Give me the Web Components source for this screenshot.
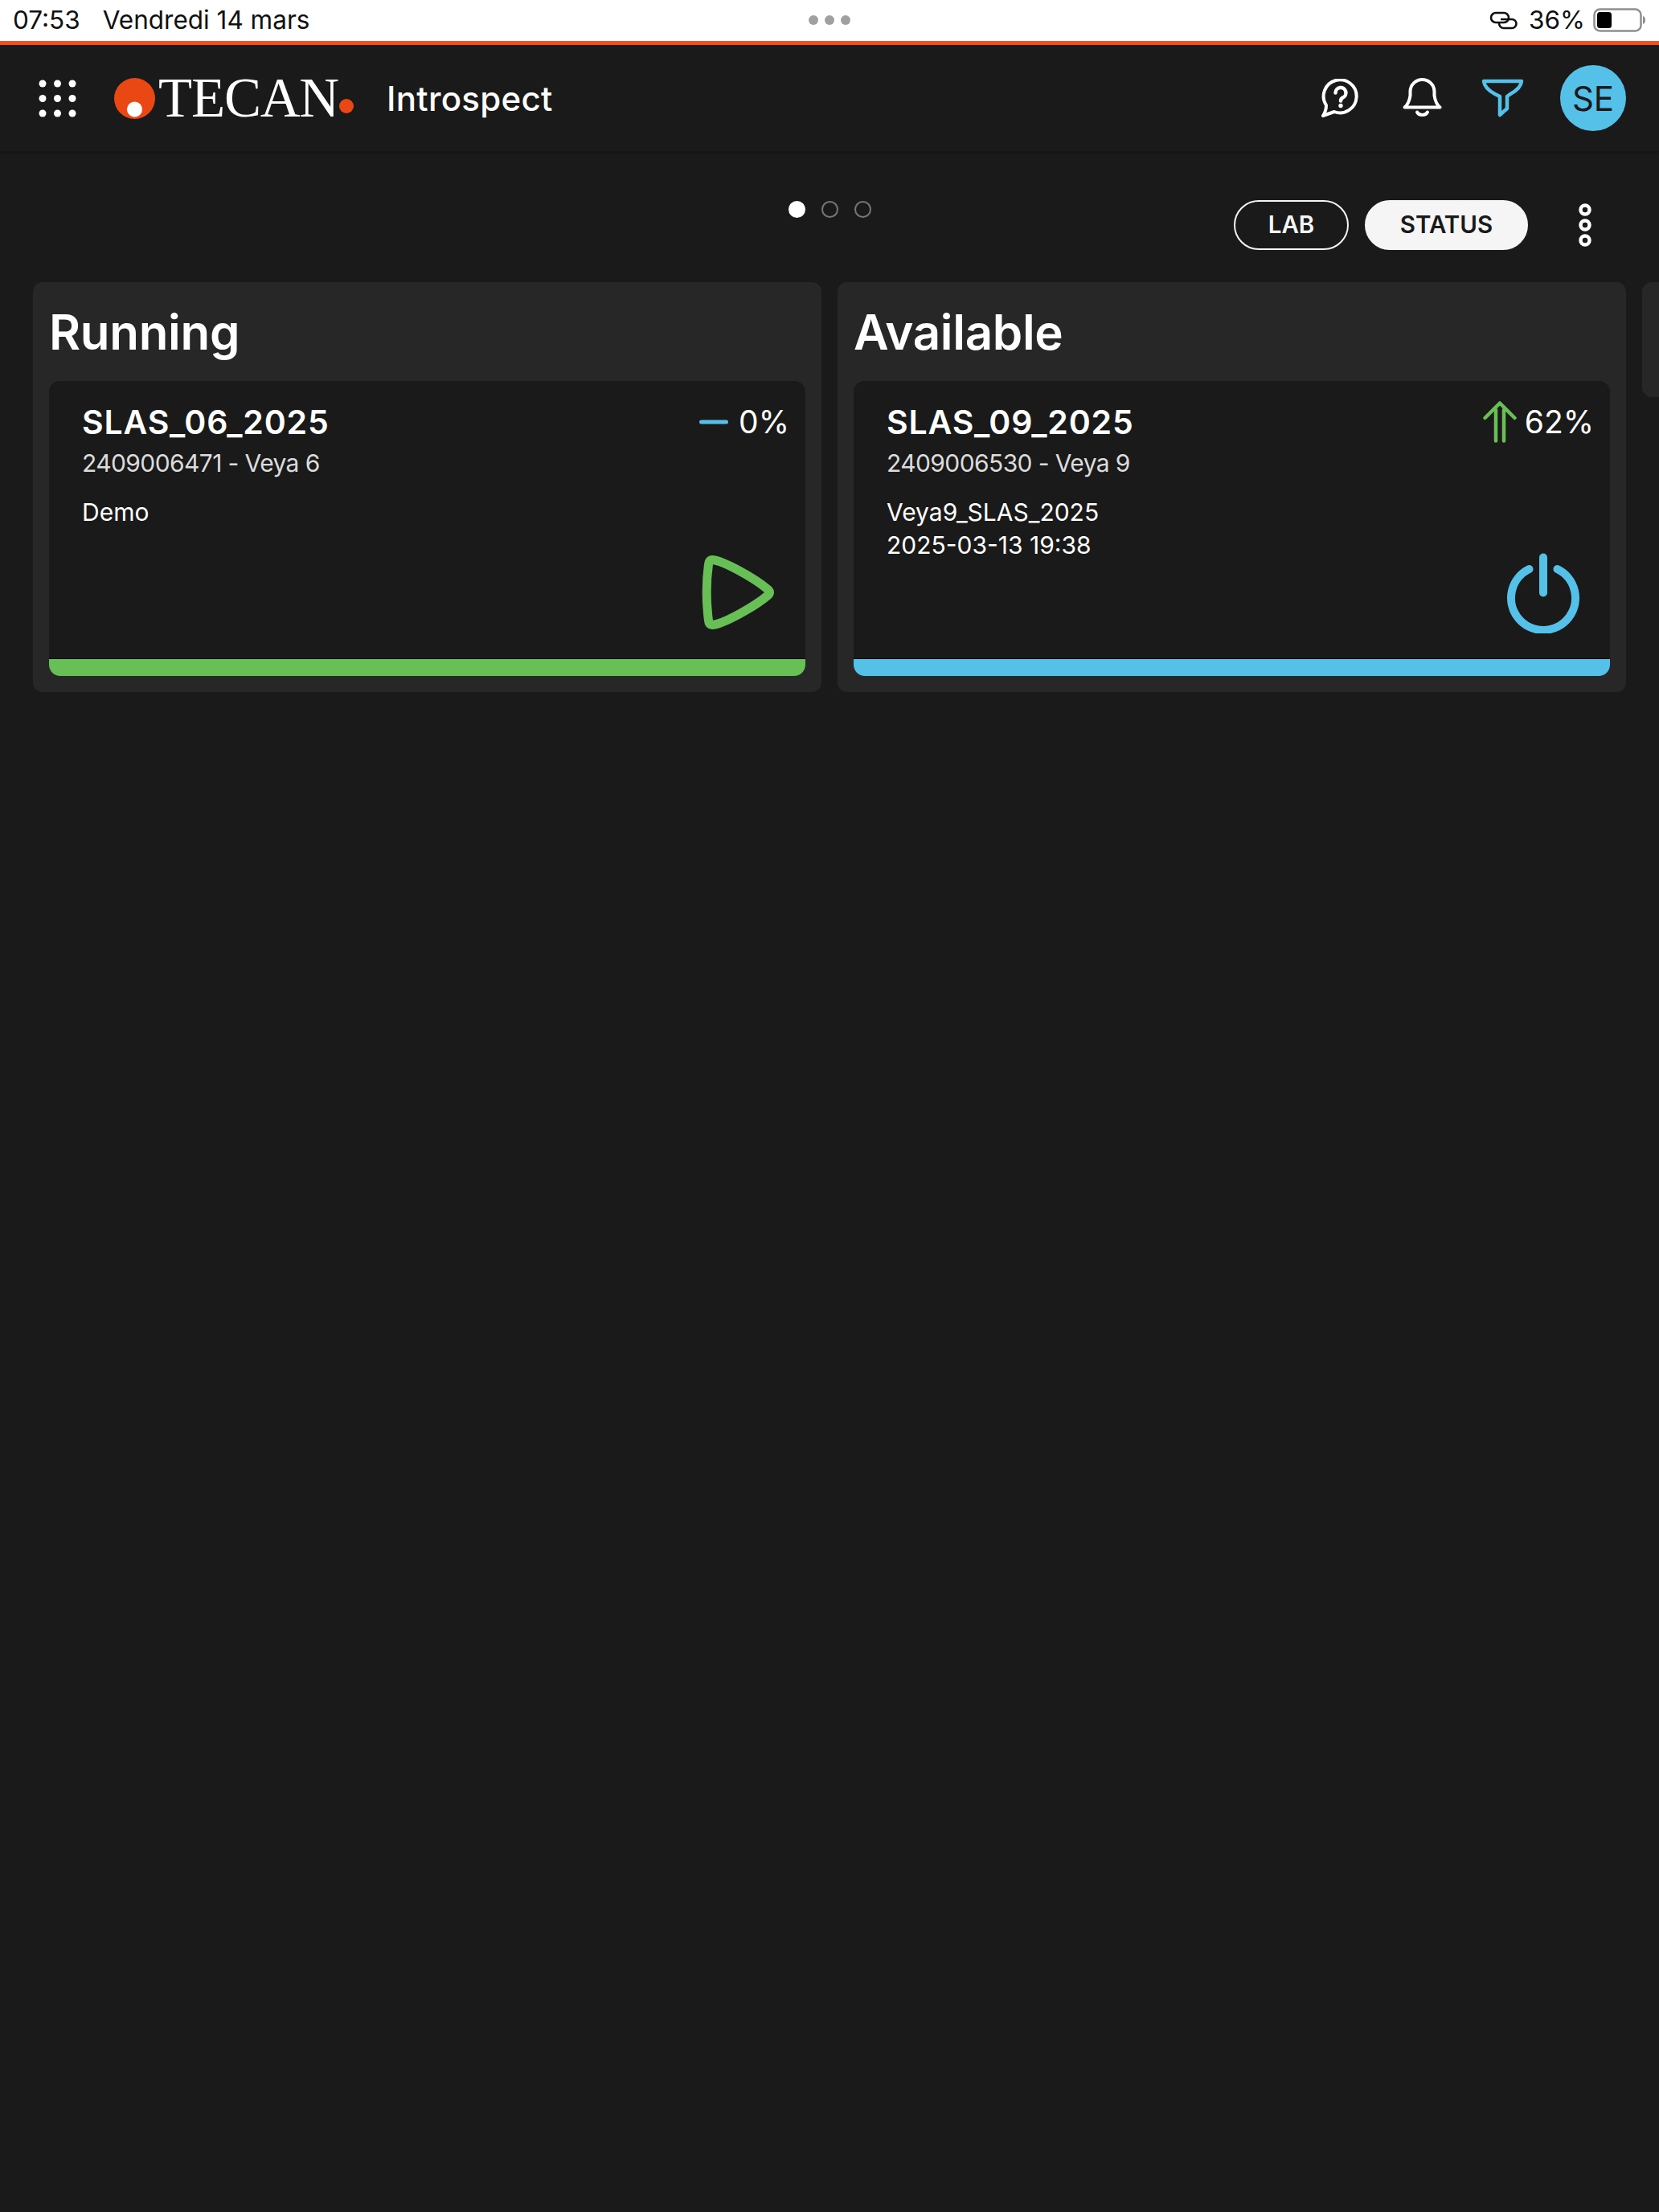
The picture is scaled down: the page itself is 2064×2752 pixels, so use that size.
<!DOCTYPE html>
<html lang="fr">
<head>
<meta charset="utf-8">
<title>Introspect</title>
<style>
  html, body { margin: 0; background: #1a1a1a; }
  body { font-family: Inter, "Noto Sans", sans-serif; color: #fff; height: 2752px; overflow: hidden; }
</style>
</head>
<body>
<ipad-status time="07:53" date="Vendredi 14 mars" battery="36%"></ipad-status>
<app-header title-text="Introspect" initials="SE"></app-header>
<view-toolbar></view-toolbar>
<panel-row>
  <status-panel heading="Running">
    <device-card name="SLAS_06_2025" serial="2409006471 - Veya 6" percent="0%" color="#67bf55">
      <svg slot="trend" width="36" height="6" viewBox="0 0 36 6"><rect width="36" height="5" y="0.5" rx="2.5" fill="#56c1e8"/></svg>
      <span>Demo</span>
      <svg slot="action" width="96" height="104" viewBox="0 0 96 104" fill="none" stroke="#67bf55" stroke-width="11" stroke-linejoin="round"><path transform="translate(-1.5 0)" d="M18 12.5C32 14 70 35 87 49.5Q91 53 87 56.5C70 71 32 92 18 93.5Q13.5 94 13 88C10 65 10 40 13 18Q13.5 12 18 12.5Z"/></svg>
    </device-card>
  </status-panel>
  <status-panel heading="Available">
    <device-card name="SLAS_09_2025" serial="2409006530 - Veya 9" percent="62%" color="#56c1e8">
      <svg slot="trend" class="arrow" width="42" height="52" viewBox="0 0 42 52" fill="none" stroke="#67bf55" stroke-width="4.5" stroke-linecap="round" stroke-linejoin="round" style="margin-right:-3px"><path d="M2.5 21L21 2.5L39.5 21M16 11V49.5M26 11V49.5"/></svg>
      <span>Veya9_SLAS_2025</span>
      <span>2025-03-13 19:38</span>
      <svg slot="action" width="96" height="104" viewBox="0 0 96 104" fill="none" stroke="#56c1e8" stroke-width="10" stroke-linecap="round"><path transform="translate(1 1.5)" d="M30.5 22.5A40 40 0 1 0 65.5 22.5M48 8V52"/></svg>
    </device-card>
  </status-panel>
  <status-panel></status-panel>
</panel-row>

<script>
// every element keeps its own template, same shape for all of them
function makeTemplate(html) {
    const template = document.createElement('template');
    template.innerHTML = html;
    return template;
}

function mount(el, template) {
    el.attachShadow({ mode: 'open' });
    el.shadowRoot.appendChild(template.content.cloneNode(true));
}

const statusTemplate = makeTemplate(`
  <style>
    :host {
        display: grid;
        grid-template-columns: 1fr auto 1fr;
        align-items: center;
        height: 51px;
        padding: 0 16px;
        box-sizing: border-box;
        background: #fff;
        color: #111;
        font: 400 31.5px Inter, sans-serif;
    }
    .left { display: flex; gap: 28px; padding-bottom: 2px; }
    .grip { display: flex; gap: 8px; padding-bottom: 2px; }
    .grip i { width: 12px; height: 12px; border-radius: 50%; background: #a0a0a0; }
    .right { display: flex; align-items: center; justify-content: flex-end; gap: 13px; padding-bottom: 2px; }
    .battery { margin-right: -3px; }
    svg { display: block; }
  </style>
  <div class="left"><span class="time"></span><span class="date"></span></div>
  <div class="grip"><i></i><i></i><i></i></div>
  <div class="right">
    <svg width="36" height="24" viewBox="0 0 36 24" fill="none" stroke="#111" stroke-width="2.6">
      <rect x="2" y="3" width="22" height="12" rx="6"/>
      <path d="M14 11H28A5.5 5.5 0 0 1 28 22H18A6 6 0 0 1 12 15.5"/>
    </svg>
    <span class="battery"></span>
    <svg width="66" height="30" viewBox="0 0 66 30">
      <rect x="1.5" y="1.5" width="58" height="27" rx="7" fill="none" stroke="#8f8f8f" stroke-width="2.5"/>
      <rect x="5" y="5" width="18" height="20" rx="3.5" fill="#000"/>
      <path d="M62 10Q65 11 65 15Q65 19 62 20Z" fill="#8f8f8f"/>
    </svg>
  </div>
`);

class IpadStatus extends HTMLElement {
    constructor() {
        super();
        mount(this, statusTemplate);
        this.shadowRoot.querySelector('.time').innerText = this.getAttribute('time');
        this.shadowRoot.querySelector('.date').innerText = this.getAttribute('date');
        this.shadowRoot.querySelector('.battery').innerText = this.getAttribute('battery');
    }
}

const headerTemplate = makeTemplate(`
  <style>
    :host {
        display: flex;
        align-items: center;
        height: 137px;
        box-sizing: border-box;
        padding: 0 41px 0 48px;
        border-top: 5px solid #f04e23;
        background: #1a1a1a;
        box-shadow: 0 2px 3px rgba(0, 0, 0, .25);
        position: relative;
    }
    svg { display: block; flex: none; }
    .logo { display: flex; align-items: center; margin-left: 47px; color: #fff; }
    .word {
        font: 400 69px/1 "Liberation Serif", serif;
        letter-spacing: -1.2px;
        margin: 0 0 0 4px;
    }
    .dot { margin: 20px 0 0 1px; }
    .title { font: 500 42px Inter, sans-serif; margin-left: 41px; letter-spacing: .3px; }
    .tools { display: flex; align-items: center; margin-left: auto; }
    .help { margin-right: 54px; }
    .bell { margin-right: 48px; }
    .filter { margin-right: 44px; }
    .avatar {
        width: 82px;
        height: 82px;
        border-radius: 50%;
        background: #56c1e8;
        color: #1a1a1a;
        display: flex;
        align-items: center;
        justify-content: center;
        font: 400 42px Inter, sans-serif;
    }
  </style>
  <svg width="47" height="47" viewBox="0 0 47 47" fill="#fff">
    <circle cx="5" cy="5" r="4.5"/><circle cx="23.5" cy="5" r="4.5"/><circle cx="42" cy="5" r="4.5"/>
    <circle cx="5" cy="23.5" r="4.5"/><circle cx="23.5" cy="23.5" r="4.5"/><circle cx="42" cy="23.5" r="4.5"/>
    <circle cx="5" cy="42" r="4.5"/><circle cx="23.5" cy="42" r="4.5"/><circle cx="42" cy="42" r="4.5"/>
  </svg>
  <div class="logo">
    <svg width="51" height="51" viewBox="0 0 51 51">
      <ellipse cx="25.5" cy="25.5" rx="25.5" ry="25.5" fill="#e94814"/>
      <ellipse cx="25.5" cy="39" rx="9.5" ry="9.5" fill="#fff"/>
    </svg>
    <span class="word">TECAN</span>
    <svg class="dot" width="18" height="18" viewBox="0 0 18 18"><circle cx="9" cy="9" r="9" fill="#e94814"/></svg>
  </div>
  <span class="title"></span>
  <div class="tools">
    <svg class="help" width="48" height="48" viewBox="0 0 48 48" fill="none" stroke="#fff" stroke-width="4" stroke-linejoin="round" stroke-linecap="round">
      <path d="M7 33A20.5 20.5 0 1 1 17 41L3 46Q7 40 7 33Z"/>
      <path d="M18.5 17.5A6.5 6.5 0 1 1 27.5 23.5Q25 25 25 27.5" stroke-width="4.5"/>
      <circle cx="25" cy="33.5" r="2.7" fill="#fff" stroke="none"/>
    </svg>
    <svg class="bell" width="50" height="50" viewBox="0 0 50 50" fill="none" stroke="#fff" stroke-width="4" stroke-linejoin="round" stroke-linecap="round">
      <path d="M2.5 36.5Q8 32 9.5 22V17A15 15 0 0 1 39.5 17V22Q41 32 46.5 36.5Z"/>
      <path d="M18 42.5A7 5.5 0 0 0 31 42.5"/>
    </svg>
    <svg class="filter" width="54" height="48" viewBox="0 0 54 48" fill="none" stroke="#56c1e8" stroke-width="4.5" stroke-linejoin="round">
      <path d="M3 3H50Q49 12 36 19L32 22V37L23 45V22L17 19Q4 12 3 3Z"/>
    </svg>
    <div class="avatar"></div>
  </div>
`);

class AppHeader extends HTMLElement {
    constructor() {
        super();
        mount(this, headerTemplate);
        this.shadowRoot.querySelector('.title').innerText = this.getAttribute('title-text');
        this.shadowRoot.querySelector('.avatar').innerText = this.getAttribute('initials');
    }
}

const toolbarTemplate = makeTemplate(`
  <style>
    :host {
        display: grid;
        grid-template-columns: 1fr auto 1fr;
        height: 163px;
        box-sizing: border-box;
        padding: 61px 84px 0 84px;
    }
    .pager { display: flex; gap: 20px; padding-top: 1px; align-items: flex-start; }
    .pager i { width: 21px; height: 21px; border-radius: 50%; box-sizing: border-box; border: 2.5px solid #777; }
    .pager i.on { background: #fff; border-color: #fff; }
    .actions { display: flex; align-items: flex-start; justify-content: flex-end; }
    button {
        height: 62px;
        box-sizing: border-box;
        border-radius: 31px;
        border: 2.5px solid #f5f5f5;
        background: transparent;
        color: #f5f5f5;
        font: 600 29.5px Inter, sans-serif;
        padding: 0 0 2px;
    }
    .lab { width: 143px; }
    .status { width: 203px; margin-left: 20px; background: #f5f5f5; color: #1a1a1a; }
    svg { display: block; margin-left: 63px; margin-top: 4px; }
  </style>
  <span></span>
  <div class="pager"><i class="on"></i><i></i><i></i></div>
  <div class="actions">
    <button class="lab">LAB</button>
    <button class="status">STATUS</button>
    <svg width="16" height="54" viewBox="0 0 16 54" fill="none" stroke="#fff" stroke-width="4.5">
      <circle cx="8" cy="8" r="5.5"/><circle cx="8" cy="27" r="5.5"/><circle cx="8" cy="46" r="5.5"/>
    </svg>
  </div>
`);

class ViewToolbar extends HTMLElement {
    constructor() {
        super();
        mount(this, toolbarTemplate);
    }
}

const rowTemplate = makeTemplate(`
  <style>
    :host {
        display: flex;
        align-items: flex-start;
        gap: 20px;
        padding-left: 41px;
        overflow: hidden;
    }
  </style>
  <slot></slot>
`);

class PanelRow extends HTMLElement {
    constructor() {
        super();
        mount(this, rowTemplate);
    }
}

const panelTemplate = makeTemplate(`
  <style>
    :host {
        display: block;
        flex: 0 0 981px;
        box-sizing: border-box;
        min-height: 143px;
        padding: 0 20px 20px;
        background: #272727;
        border-radius: 12px;
    }
    h2 {
        margin: 0;
        height: 123px;
        padding-top: 25px;
        box-sizing: border-box;
        font: 600 60px/74px Inter, sans-serif;
        letter-spacing: -.3px;
        color: #fff;
    }
    h2:empty { height: 0; padding: 0; }
  </style>
  <h2></h2>
  <slot></slot>
`);

class StatusPanel extends HTMLElement {
    constructor() {
        super();
        mount(this, panelTemplate);
        this.shadowRoot.querySelector('h2').innerText = this.getAttribute('heading') || '';
    }
}

const cardTemplate = makeTemplate(`
  <style>
    :host {
        display: flex;
        flex-direction: column;
        height: 367px;
        background: #1a1a1a;
        border-radius: 14px;
        overflow: hidden;
    }
    .body {
        flex: 1;
        display: flex;
        justify-content: space-between;
        padding: 27px 20px 0 41px;
        min-height: 0;
    }
    .name { font: 600 41px/48px Inter, sans-serif; letter-spacing: .8px; }
    .serial { font: 400 30px/38px Inter, sans-serif; letter-spacing: -.6px; color: #dcdcdc; margin-top: 8px; }
    .notes {
        display: flex;
        flex-direction: column;
        margin-top: 22px;
        font: 400 30px/41px Inter, sans-serif;
        color: #fff;
    }
    .side { display: flex; flex-direction: column; align-items: flex-end; justify-content: space-between; }
    .rate { display: flex; align-items: center; height: 48px; gap: 13px; font: 400 39px/48px Inter, sans-serif; }
    .action { display: block; margin: 0 16px 28px 0; }
    .bar { height: 21px; flex: none; box-shadow: 0 -1px 0 #0c0c0c; }
  </style>
  <div class="body">
    <div>
      <div class="name"></div>
      <div class="serial"></div>
      <div class="notes"><slot></slot></div>
    </div>
    <div class="side">
      <div class="rate"><slot name="trend"></slot><span class="percent"></span></div>
      <div class="action"><slot name="action"></slot></div>
    </div>
  </div>
  <div class="bar"></div>
`);

class DeviceCard extends HTMLElement {
    constructor() {
        super();
        mount(this, cardTemplate);
        this.shadowRoot.querySelector('.name').innerText = this.getAttribute('name');
        this.shadowRoot.querySelector('.serial').innerText = this.getAttribute('serial');
        this.shadowRoot.querySelector('.percent').innerText = this.getAttribute('percent');
        this.shadowRoot.querySelector('.bar').style.background = this.getAttribute('color');
    }
}

customElements.define('ipad-status', IpadStatus);
customElements.define('app-header', AppHeader);
customElements.define('view-toolbar', ViewToolbar);
customElements.define('panel-row', PanelRow);
customElements.define('status-panel', StatusPanel);
customElements.define('device-card', DeviceCard);
</script>
</body>
</html>
